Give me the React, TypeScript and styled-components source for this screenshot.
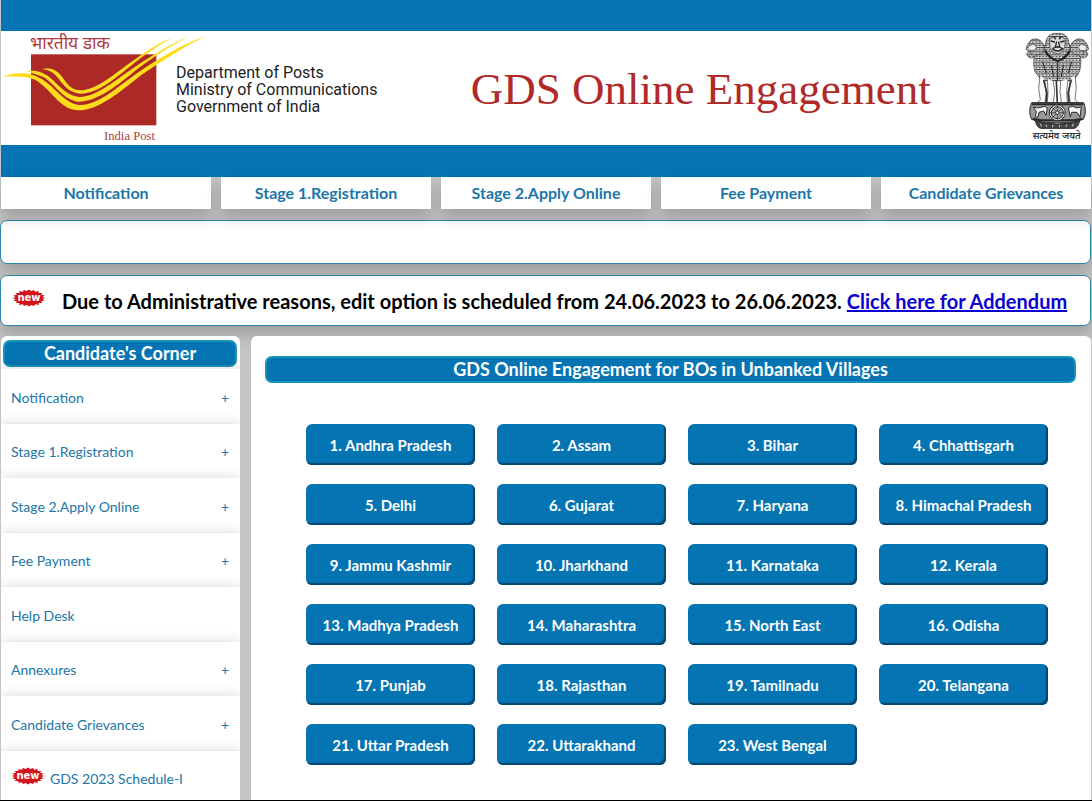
import React from "react";
import styled, { createGlobalStyle } from "styled-components";

const blue = "#0474b3";
const linkBlue = "#1c76a8";
const shadow = "0 8px 16px 0 rgba(0, 0, 0, 0.2)";

const GlobalStyle = createGlobalStyle`
  *, *::before, *::after { box-sizing: border-box; }
  body {
    margin: 0;
    background: #c4c4c4;
    font-family: Lato, "Liberation Sans", sans-serif;
  }
`;

const Page = styled.div`
  display: flex;
  flex-direction: column;
  height: 100vh;
  overflow: hidden;
  padding-right: 1px;
  border-bottom: 1px solid #000;
`;

const Banner = styled.header`
  margin: 0 0 0 1px;
  border-top: 31px solid ${blue};
  border-bottom: 32px solid ${blue};
  background: #fff;
  display: flex;
  align-items: center;
  height: 177px;
  flex: none;
`;

const Department = styled.p`
  margin: 0 0 0 -45px;
  padding-top: 3px;
  font: 16px/17px Roboto, sans-serif;
  color: #222;
  white-space: nowrap;
`;

const Title = styled.h1`
  margin: 0 auto;
  padding-top: 2px;
  font: 45px/50px "Liberation Serif", serif;
  color: #b02a2a;
  white-space: nowrap;
`;

const Nav = styled.nav`
  position: relative;
  display: grid;
  grid-template-columns: repeat(5, 1fr);
  gap: 10px;
  padding: 0 0 0 1px;
  flex: none;
`;

const NavLink = styled.a`
  background: #fff;
  color: ${linkBlue};
  font-size: 16px;
  font-weight: 700;
  line-height: 32px;
  text-align: center;
  text-decoration: none;
  box-shadow: ${shadow};
`;

const Notice = styled.section<{ $height: number }>`
  display: flex;
  align-items: center;
  flex: none;
  min-height: ${(p) => p.$height}px;
  margin: 11px 0 0;
  padding: 0 11px;
  border: 1px solid #2c86ab;
  border-radius: 7px;
  background: #fff;
  box-shadow: ${shadow};
`;

const NoticeText = styled.p`
  margin: 0 0 0 16px;
  font-size: 20px;
  font-weight: 700;
  line-height: 24px;
  color: #000;
  white-space: nowrap;

  a { color: #0b00d0; }
`;

const Columns = styled.div`
  display: grid;
  grid-template-columns: 239px 1fr;
  gap: 11px;
  margin: 10px 0 0 1px;
  flex: 1;
`;

const Sidebar = styled.aside`
  padding-top: 4px;
  border-radius: 6px 6px 0 0;
  background: #fff;
`;

const Heading = styled.h2`
  margin: 0;
  border: 2px solid #1795b8;
  border-radius: 7px;
  background: ${blue};
  color: #fff;
  font-size: 18px;
  font-weight: 700;
  line-height: 23px;
  text-align: center;
`;

const SideHeading = styled(Heading)`
  margin: 0 3px 2px 2px;
`;

const SideList = styled.ul`
  display: grid;
  grid-auto-rows: 1fr;
  height: 436px;
  margin: 0;
  padding: 0;
  list-style: none;
`;

const SideItem = styled.li`
  display: flex;
  background: #fff;
  box-shadow: 0 0 12px 0 rgba(0, 0, 0, 0.16);
  clip-path: inset(-14px 0 0 0);
`;

const SideLink = styled.a`
  display: flex;
  flex: 1;
  align-items: center;
  gap: 5px;
  padding: 2px 11px 0 10px;
  color: ${linkBlue};
  font-size: 14px;
  text-decoration: none;
`;

const Plus = styled.span`
  margin-left: auto;
`;

const Content = styled.main`
  padding: 20px 15px 0 14px;
  border-radius: 6px 6px 0 0;
  background: #fff;
`;

const States = styled.div`
  display: grid;
  grid-template-columns: repeat(4, 1fr);
  gap: 19px 22px;
  margin: 41px 28px 0 41px;
`;

const StateButton = styled.button`
  height: 41px;
  padding: 0;
  border: 0;
  border-radius: 6px;
  background: ${blue};
  box-shadow: inset -2px -2px 1px #07456c;
  color: #fff;
  font: 700 15px/20px Lato, "Liberation Sans", sans-serif;
  white-space: nowrap;
`;

const Drawing = styled.svg`
  flex: none;
`;

function PostLogo() {
  return (
    <Drawing width="220" height="114" viewBox="3 18 660 342" role="img" aria-label="India Post">
      <text x="90" y="72" fontSize="52" fill="#b3393a" fontFamily="'Noto Sans', sans-serif">भारतीय डाक</text>
      <rect x="93" y="88" width="376" height="213" fill="#ac2926" />
      <g fill="#fddc1c">
        <path d="M8 154C50 140 90 143 118 158C165 182 190 234 238 240C292 242 350 188 412 144C480 98 550 56 616 34C550 66 480 112 420 153C360 200 295 258 232 256C175 250 155 192 105 164C75 153 45 156 8 154Z" />
        <path d="M79 140C105 132 128 142 145 154C178 180 195 212 238 216C290 217 350 162 408 124C465 86 515 54 564 37C515 60 465 94 412 132C358 177 292 231 235 230C187 224 165 176 130 156C110 147 93 143 79 140Z" />
        <path d="M126 132C150 128 163 132 177 145C200 170 205 194 240 196C290 196 345 145 398 108C440 79 470 56 514 40C480 59 445 82 402 115C348 158 293 208 239 206C194 200 185 166 160 145C149 136 138 133 126 132Z" />
      </g>
      <text x="312" y="344" fontSize="38" fill="#b3393a" fontFamily="'Liberation Serif', serif">India Post</text>
    </Drawing>
  );
}

function Emblem() {
  return (
    <Drawing width="67" height="114" viewBox="42 18 201 342" role="img" aria-label="सत्यमेव जयते">
      <defs>
        <pattern id="mane" width="10" height="11" patternUnits="userSpaceOnUse">
          <rect width="10" height="11" fill="#3a3a3a" />
          <path d="M1 2Q4 9 9 3M-4 8Q-1 14 4 8M6 8Q9 14 14 8" stroke="#f2f2f2" strokeWidth="3" fill="none" />
        </pattern>
      </defs>
      <g stroke="#333" strokeWidth="2">
        <path d="M77 78Q66 110 75 140Q86 156 96 167L186 167Q204 156 210 134Q216 100 208 78L178 60H106Z" fill="url(#mane)" />
        <path d="M90 150L86 190 91 225 80 234H105L108 205 104 163M112 163L114 200 112 234H130L134 200 130 168M152 168L150 200 154 234H172L170 200 174 163M181 160L177 205 181 234H205L195 223 199 190 195 150" fill="#fafafa" />
        <path d="M101 165L111 205 108 232M139 166L142 234M184 164L174 204 177 232" fill="none" strokeWidth="5" />
        <path d="M101 58Q85 34 63 45Q50 58 48 73L56 78 50 87Q55 101 67 99L80 90Q95 90 103 78Z" fill="url(#mane)" />
        <path d="M183 58Q199 34 221 45Q234 58 236 73L228 78 234 87Q229 101 217 99L204 90Q189 90 181 78Z" fill="url(#mane)" />
        <path d="M54 64L70 57 80 67 73 76 60 77 66 90M230 64L214 57 204 67 211 76 224 77 218 90" fill="#ededed" />
        <path d="M109 44Q119 22 142 25Q166 22 175 44L180 70Q166 98 143 108Q120 98 104 70Z" fill="url(#mane)" />
        <path d="M119 42Q142 28 166 42L164 67Q158 84 143 86Q126 84 120 67Z" fill="#dadada" />
      </g>
      <path d="M122 48L135 51M151 51L164 48M140 50L136 66H149L146 50M127 71Q143 62 158 71Q143 85 127 71M131 34L137 43M153 34L148 43" fill="none" stroke="#222" strokeWidth="4" />
      <path d="M105 78Q118 101 143 108Q168 101 179 78" fill="none" stroke="#1f1f1f" strokeWidth="6" />
      <path d="M98 110L109 145M185 110L175 145M143 112V165M124 120L131 155M160 120L154 155" stroke="#1f1f1f" strokeWidth="3" />
      <g stroke="#292929" strokeWidth="3">
        <path d="M65 233H221Q232 260 220 283L190 292H92L65 283Q53 260 65 233Z" fill="#999" />
        <path d="M66 238H220M68 281L94 286H191L217 281" fill="none" strokeWidth="6" />
        <path d="M70 246L83 249 104 244 112 250 108 271 101 258 87 262 84 277 76 275 79 260ZM175 249L186 243 201 249 214 245 210 276 201 262 185 262 181 276Z" fill="#f6f6f6" />
        <circle cx="142" cy="263" r="24" fill="#eee" />
        <circle cx="142" cy="263" r="18" fill="#aaa" />
        <path d="M142 240V286M119 263H165M126 247L158 279M158 247L126 279" strokeWidth="2" />
        <circle cx="142" cy="263" r="5" fill="#fff" />
        <path d="M76 286Q80 308 92 310H192Q205 308 209 286Q180 297 142 297Q105 297 76 286Z" fill="#444" />
        <path d="M91 296L94 305M108 299L110 306M128 300V307M149 300V307M170 299L168 306M190 296L187 305" stroke="#ccc" />
      </g>
      <text x="68" y="342" fontSize="29" fontWeight="500" fill="#222" fontFamily="'Noto Sans', sans-serif">सत्यमेव जयते</text>
    </Drawing>
  );
}

const burst = Array.from({ length: 40 }, (_, i) => {
  const a = (i / 40) * Math.PI * 2;
  const r = i % 2 ? 0.82 : 1;
  return `${(17 + 16.5 * r * Math.cos(a)).toFixed(1)},${(9 + 8.5 * r * Math.sin(a)).toFixed(1)}`;
}).join(" ");

function NewBadge() {
  return (
    <Drawing width="34" height="24" viewBox="0 0 34 24" role="img" aria-label="new">
      <polygon points={burst} fill="#d3131b" />
      <text x="17" y="12" textAnchor="middle" fontSize="10" fontWeight="700" fill="#fff" fontFamily="'DejaVu Sans', sans-serif">new</text>
    </Drawing>
  );
}

const navItems = ["Notification", "Stage 1.Registration", "Stage 2.Apply Online", "Fee Payment", "Candidate Grievances"];

const sideItems = [
  { label: "Notification", expandable: true },
  { label: "Stage 1.Registration", expandable: true },
  { label: "Stage 2.Apply Online", expandable: true },
  { label: "Fee Payment", expandable: true },
  { label: "Help Desk" },
  { label: "Annexures", expandable: true },
  { label: "Candidate Grievances", expandable: true },
  { label: "GDS 2023 Schedule-I", isNew: true },
];

const states = [
  "Andhra Pradesh", "Assam", "Bihar", "Chhattisgarh", "Delhi", "Gujarat", "Haryana", "Himachal Pradesh",
  "Jammu Kashmir", "Jharkhand", "Karnataka", "Kerala", "Madhya Pradesh", "Maharashtra", "North East", "Odisha",
  "Punjab", "Rajasthan", "Tamilnadu", "Telangana", "Uttar Pradesh", "Uttarakhand", "West Bengal",
];

export default function App() {
  return (
    <Page>
      <GlobalStyle />
      <Banner>
        <PostLogo />
        <Department>
          Department of Posts<br />
          Ministry of Communications<br />
          Government of India
        </Department>
        <Title>GDS Online Engagement</Title>
        <Emblem />
      </Banner>
      <Nav>
        {navItems.map((item) => <NavLink key={item} href="#">{item}</NavLink>)}
      </Nav>
      <Notice $height={44} />
      <Notice $height={51}>
        <NewBadge />
        <NoticeText>
          Due to Administrative reasons, edit option is scheduled from 24.06.2023 to 26.06.2023.{" "}
          <a href="#">Click here for Addendum</a>
        </NoticeText>
      </Notice>
      <Columns>
        <Sidebar>
          <SideHeading>Candidate's Corner</SideHeading>
          <SideList>
            {sideItems.map((item) => (
              <SideItem key={item.label}>
                <SideLink href="#">
                  {item.isNew && <NewBadge />}
                  {item.label}
                  {item.expandable && <Plus>+</Plus>}
                </SideLink>
              </SideItem>
            ))}
          </SideList>
        </Sidebar>
        <Content>
          <Heading>GDS Online Engagement for BOs in Unbanked Villages</Heading>
          <States>
            {states.map((state, i) => <StateButton key={state} type="button">{i + 1}. {state}</StateButton>)}
          </States>
        </Content>
      </Columns>
    </Page>
  );
}
